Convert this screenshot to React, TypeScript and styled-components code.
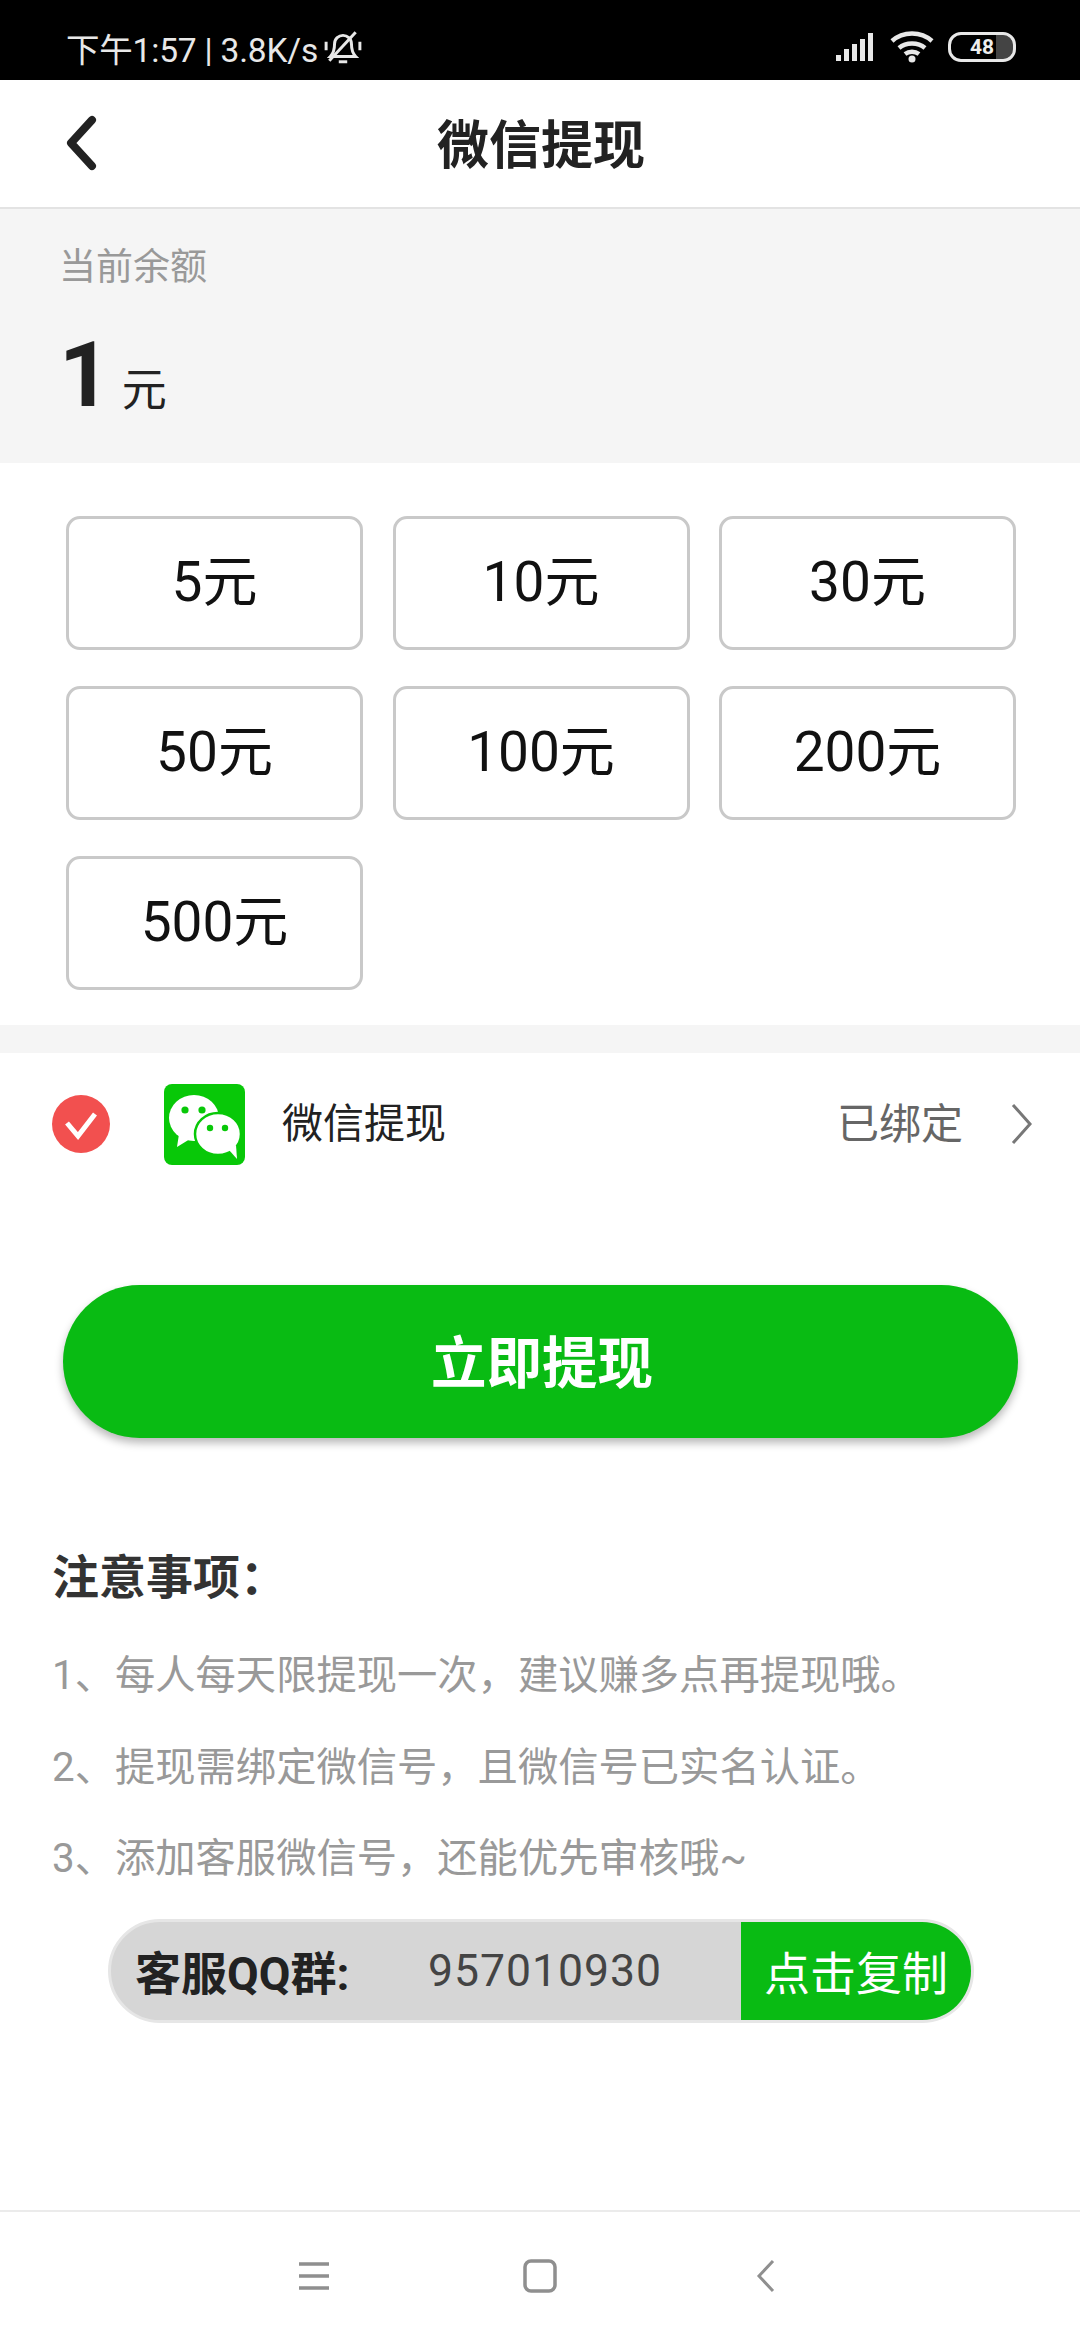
import React from "react";
import styled, { createGlobalStyle } from "styled-components";

const Global = createGlobalStyle`
  html, body { margin: 0; padding: 0; background: #fff; }
  * { box-sizing: border-box; }
  body { font-family: Roboto, "Noto Sans CJK SC", sans-serif; }
`;
const Page = styled.div`
  width: 1080px; height: 2340px; display: flex; flex-direction: column; background: #fff; overflow: hidden;
`;
const StatusBar = styled.div`
  height: 80px; background: #000; color: #e8e8e8; display: flex; align-items: center;
  justify-content: space-between; padding: 23px 64px 9px 66px; font-size: 33.5px; flex: none;
`;
const StatusLeft = styled.div`display: flex; align-items: center; gap: 6px; letter-spacing: -0.2px;`;
const StatusRight = styled.div`display: flex; align-items: center; gap: 14px;`;
const Battery = styled.div`
  width: 68px; height: 30px; border: 3px solid #e8e8e8; border-radius: 13px; font-size: 21px; font-weight: 700;
  display: flex; align-items: center; justify-content: center; color: #eee;
  background: linear-gradient(90deg, transparent 72%, #444 72%); background-clip: content-box;
`;
const Header = styled.header`
  height: 129px; flex: none; border-bottom: 2px solid #e3e3e3; position: relative;
  display: flex; align-items: center; justify-content: center; padding: 7px 0 0 2px;
`;
const BackBtn = styled.div`position: absolute; left: 62px; top: 35px; display: flex;`;
const Title = styled.h1`margin: 0; font-size: 52px; font-weight: 700; color: #222; line-height: 1.2;`;
const Balance = styled.section`
  height: 254px; flex: none; background: #f5f5f5; padding: 34px 59px 0; display: flex; flex-direction: column;
`;
const BalanceLabel = styled.div`font-size: 37px; color: #999; line-height: 50px;`;
const BalanceValue = styled.div`display: flex; align-items: baseline; gap: 11px; margin-top: 33px; color: #222;`;
const Amount = styled.span`font-size: 90px; font-weight: 700; line-height: 100px;`;
const Unit = styled.span`font-size: 45px;`;
const Grid = styled.section`
  height: 562px; flex: none; padding: 53px 64px 0 66px; display: grid;
  grid-template-columns: repeat(3, 297px); grid-auto-rows: 134px; gap: 36px 29.5px; align-content: start;
`;
const Option = styled.div`
  border: 3px solid #c9c9c9; border-radius: 14px; display: flex; align-items: center; justify-content: center;
  font-size: 55px; color: #111; padding-bottom: 12px;
`;
const Strip = styled.div`height: 28px; flex: none; background: #f5f5f5;`;
const PayRow = styled.div`
  height: 232px; flex: none; display: flex; align-items: flex-start; padding: 31px 47px 0 52px;
`;
const Check = styled.div`width: 58px; height: 58px; margin-top: 11px; display: flex; flex: none;`;
const WxIcon = styled.div`
  width: 81px; height: 81px; margin-left: 54px; background: #08c808; border-radius: 8px; display: flex; flex: none;
`;
const PayName = styled.div`margin-left: 37px; font-size: 41px; color: #222; line-height: 81px; flex: 1;`;
const PayState = styled.div`font-size: 42px; color: #666; line-height: 81px; margin-right: 46px;`;
const Chevron = styled.div`display: flex; margin-top: 19px;`;
const CashButton = styled.div`
  width: 955px; height: 153px; margin-left: 63px; flex: none; border-radius: 77px; background: #09bb13;
  color: #fff; font-size: 55.5px; font-weight: 700; display: flex; align-items: center; justify-content: center;
  box-shadow: 0 5px 9px rgba(0,0,0,0.28); padding: 0 0 5px 3px;
`;
const Notes = styled.section`padding: 110px 0 0 52px; flex: none; height: 481px; display: flex; flex-direction: column;`;
const NotesTitle = styled.h2`margin: 0 0 22px; font-size: 47px; font-weight: 700; color: #333; line-height: 60px;`;
const Note = styled.p`margin: 0; font-size: 40.3px; color: #999; line-height: 91.5px; white-space: nowrap;`;
const QQBar = styled.div`
  width: 866px; height: 104px; margin-left: 108px; flex: none; border-radius: 52px; background: #d6d6d6;
  border: 3px solid #e6e6e6; display: flex; align-items: center; overflow: hidden;
`;
const QQLabel = styled.div`margin-left: 24px; width: 256px; font-size: 46px; font-weight: 700; color: #222; white-space: nowrap; padding-bottom: 3px;`;
const QQNumber = styled.div`width: 350px; padding-left: 37px; font-size: 44.5px; color: #444; letter-spacing: 1px; flex: none;`;
const CopyBtn = styled.div`
  flex: 1; height: 100%; background: #09bb13; color: #fff; font-size: 46px; display: flex;
  align-items: center; justify-content: center; white-space: nowrap; padding-bottom: 2px;
`;
const Filler = styled.div`flex: 1;`;
const NavBar = styled.nav`
  height: 130px; flex: none; border-top: 2px solid #ebebeb; display: flex; align-items: center;
  justify-content: center;
`;
const NavSlot = styled.div`width: 226px; display: flex; justify-content: center;`;

const amounts = ["5元", "10元", "30元", "50元", "100元", "200元", "500元"];
const notes = [
  "1、每人每天限提现一次，建议赚多点再提现哦。",
  "2、提现需绑定微信号，且微信号已实名认证。",
  "3、添加客服微信号，还能优先审核哦~",
];

const BellOff = () => (
  <svg width="38" height="36" viewBox="0 0 36 34" fill="none" stroke="#e8e8e8" strokeWidth="2.8">
    <path d="M6 26c3-3 4-6 4-12 0-5 4-8 8-8s8 3 8 8c0 6 1 9 4 12z" />
    <path d="M14 31h8" />
    <path d="M5 30L30 3" />
    <path d="M2 12v8M34 12v8" />
  </svg>
);
const Signal = () => (
  <svg width="40" height="30" viewBox="0 0 40 30" fill="#e8e8e8">
    <rect x="0" y="23" width="5" height="6" /><rect x="8" y="17" width="5" height="12" />
    <rect x="16" y="12" width="5" height="17" /><rect x="24" y="7" width="5" height="22" />
    <rect x="32" y="1" width="5" height="28" />
  </svg>
);
const Wifi = () => (
  <svg width="44" height="34" viewBox="0 0 44 34" fill="none" stroke="#e8e8e8" strokeWidth="4.5">
    <path d="M2 11c11-10 29-10 40 0" /><path d="M9 18c7-6 19-6 26 0" /><path d="M15 24c4-3 10-3 14 0" />
    <circle cx="22" cy="29" r="3.5" fill="#e8e8e8" stroke="none" />
  </svg>
);
const Back = () => (
  <svg width="36" height="56" viewBox="0 0 36 56" fill="none" stroke="#222" strokeWidth="8" strokeLinecap="round" strokeLinejoin="round">
    <path d="M30 5L9 28l21 23" />
  </svg>
);
const CheckIcon = () => (
  <svg width="58" height="58" viewBox="0 0 58 58">
    <circle cx="29" cy="29" r="29" fill="#f2504f" />
    <path d="M15 28l11 13 17-22" fill="none" stroke="#fff" strokeWidth="5" />
  </svg>
);
const WeChat = () => (
  <svg width="81" height="81" viewBox="0 0 81 81">
    <ellipse cx="30" cy="34" rx="25" ry="23" fill="#fff" />
    <path d="M15 50l-2 13 13-8z" fill="#fff" />
    <circle cx="21" cy="26" r="3.6" fill="#08c808" /><circle cx="38" cy="26" r="3.6" fill="#08c808" />
    <ellipse cx="54" cy="50" rx="23" ry="21" fill="#fff" stroke="#08c808" strokeWidth="2.5" />
    <path d="M65 66l8 9-1-14z" fill="#fff" />
    <circle cx="46" cy="44" r="3.2" fill="#08c808" /><circle cx="61" cy="44" r="3.2" fill="#08c808" />
  </svg>
);
const RowChevron = () => (
  <svg width="24" height="42" viewBox="0 0 24 42" fill="none" stroke="#777" strokeWidth="3">
    <path d="M4 2l17 19L4 40" />
  </svg>
);
const NavMenu = () => (
  <svg width="34" height="30" viewBox="0 0 34 30" fill="none" stroke="#8f8f8f" strokeWidth="3.5">
    <path d="M2 3h30M2 15h30M2 27h30" />
  </svg>
);
const NavHome = () => (
  <svg width="34" height="34" viewBox="0 0 34 34" fill="none" stroke="#8f8f8f" strokeWidth="3.5">
    <rect x="2" y="2" width="30" height="30" rx="6" />
  </svg>
);
const NavBack = () => (
  <svg width="22" height="34" viewBox="0 0 22 34" fill="none" stroke="#8f8f8f" strokeWidth="3">
    <path d="M18 2L4 17l14 15" />
  </svg>
);

export default function App() {
  return (
    <Page>
      <Global />
      <StatusBar>
        <StatusLeft>下午1:57 | 3.8K/s <BellOff /></StatusLeft>
        <StatusRight><Signal /><Wifi /><Battery>48</Battery></StatusRight>
      </StatusBar>
      <Header>
        <BackBtn><Back /></BackBtn>
        <Title>微信提现</Title>
      </Header>
      <Balance>
        <BalanceLabel>当前余额</BalanceLabel>
        <BalanceValue><Amount>1</Amount><Unit>元</Unit></BalanceValue>
      </Balance>
      <Grid>{amounts.map(a => <Option key={a}>{a}</Option>)}</Grid>
      <Strip />
      <PayRow>
        <Check><CheckIcon /></Check>
        <WxIcon><WeChat /></WxIcon>
        <PayName>微信提现</PayName>
        <PayState>已绑定</PayState>
        <Chevron><RowChevron /></Chevron>
      </PayRow>
      <CashButton>立即提现</CashButton>
      <Notes>
        <NotesTitle>注意事项：</NotesTitle>
        {notes.map(n => <Note key={n}>{n}</Note>)}
      </Notes>
      <QQBar>
        <QQLabel>客服QQ群:</QQLabel>
        <QQNumber>957010930</QQNumber>
        <CopyBtn>点击复制</CopyBtn>
      </QQBar>
      <Filler />
      <NavBar>
        <NavSlot><NavMenu /></NavSlot>
        <NavSlot><NavHome /></NavSlot>
        <NavSlot><NavBack /></NavSlot>
      </NavBar>
    </Page>
  );
}
